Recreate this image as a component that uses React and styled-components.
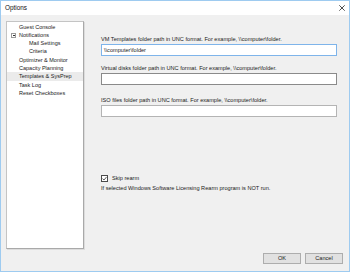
import React from "react";
import styled, { createGlobalStyle } from "styled-components";

const Global = createGlobalStyle`
  html, body { margin: 0; padding: 0; background: #ffffff; }
  * { box-sizing: border-box; }
  body { font-family: "Liberation Sans", Arial, sans-serif; color: #1a1a1a; }
`;

const Window = styled.div`
  width: 350px;
  height: 272px;
  border: 1px solid #9ecbf0;
  display: flex;
  flex-direction: column;
  background: #f0f0f0;
`;

const TitleBar = styled.div`
  height: 14px;
  flex: none;
  background: #ffffff;
  display: flex;
  align-items: center;
  justify-content: space-between;
  padding: 0 4px 0 4px;
`;

const Title = styled.span`
  font-size: 6.4px;
  line-height: 14px;
  color: #111;
`;

const CloseIcon = styled.svg`
  width: 6px;
  height: 6px;
  display: block;
`;

const Main = styled.div`
  flex: 1;
  display: flex;
  padding: 6px 0 0 5px;
  min-height: 0;
`;

const Tree = styled.div`
  width: 78px;
  flex: none;
  background: #ffffff;
  border: 1px solid #c4c4c4;
  border-right-color: #a9a9a9;
  border-bottom-color: #a9a9a9;
  box-shadow: 1px 1px 0 #dcdcdc;
  padding-top: 0.5px;
`;

const TreeRow = styled.div`
  position: relative;
  height: 8.33px;
  line-height: 8.33px;
  font-size: 5.5px;
  white-space: nowrap;
  padding-left: ${(p) => p.$indent}px;
  background: ${(p) => (p.$selected ? "#ebebeb" : "transparent")};
`;

const Expander = styled.span`
  position: absolute;
  left: 4px;
  top: 1.7px;
  width: 5px;
  height: 5px;
  border: 1px solid #9a9a9a;
  background: #fff;
  &::after {
    content: "";
    position: absolute;
    left: 0.5px;
    right: 0.5px;
    top: 1.5px;
    height: 0.8px;
    background: #333;
  }
`;

const Content = styled.div`
  margin-left: 17px;
  width: 236px;
  padding-top: 14px;
  display: flex;
  flex-direction: column;
`;

const Label = styled.div`
  font-size: 5.6px;
  line-height: 8px;
  white-space: nowrap;
  margin-top: ${(p) => p.$mt || 0}px;
  margin-bottom: 1px;
`;

const TextBox = styled.div`
  height: 12px;
  background: #ffffff;
  border: 1px solid ${(p) => p.$border};
  font-size: 5.6px;
  line-height: 10px;
  padding-left: 2px;
  white-space: nowrap;
`;

const CheckRow = styled.label`
  display: flex;
  align-items: center;
  gap: 4px;
  margin-top: 57px;
  height: 8px;
  font-size: 5.6px;
  line-height: 8px;
`;

const CheckBox = styled.span`
  width: 7px;
  height: 7px;
  border: 1px solid #4a4a4a;
  background: #ffffff;
  display: flex;
  align-items: center;
  justify-content: center;
`;

const Helper = styled.div`
  font-size: 5.6px;
  line-height: 8px;
  margin-top: 2px;
  white-space: nowrap;
`;

const Footer = styled.div`
  height: 22px;
  flex: none;
  display: flex;
  justify-content: flex-end;
  gap: 4px;
  padding: 4px 6px 7px 0;
`;

const Button = styled.button`
  width: 38px;
  height: 11px;
  padding: 0;
  margin: 0;
  background: #e1e1e1;
  border: 1px solid #adadad;
  font-family: "Liberation Sans", Arial, sans-serif;
  font-size: 5.6px;
  line-height: 9px;
  color: #1a1a1a;
`;

const treeItems = [
  { text: "Guest Console", indent: 12 },
  { text: "Notifications", indent: 12, expander: true },
  { text: "Mail Settings", indent: 22 },
  { text: "Criteria", indent: 22 },
  { text: "Optimizer & Monitor", indent: 12 },
  { text: "Capacity Planning", indent: 12 },
  { text: "Templates & SysPrep", indent: 12, selected: true },
  { text: "Task Log", indent: 12 },
  { text: "Reset Checkboxes", indent: 12 },
];

export default function App() {
  return (
    <>
      <Global />
      <Window>
        <TitleBar>
          <Title>Options</Title>
          <CloseIcon viewBox="0 0 6 6">
            <path d="M0.3 0.3 L5.7 5.7 M5.7 0.3 L0.3 5.7" stroke="#222" strokeWidth="0.8" />
          </CloseIcon>
        </TitleBar>
        <Main>
          <Tree>
            {treeItems.map((it) => (
              <TreeRow key={it.text} $indent={it.indent} $selected={it.selected}>
                {it.expander && <Expander />}
                {it.text}
              </TreeRow>
            ))}
          </Tree>
          <Content>
            <Label>VM Templates folder path in UNC format. For example, \\computer\folder.</Label>
            <TextBox $border="#7eb4ea">\\computer\folder</TextBox>
            <Label $mt={8}>Virtual disks folder path in UNC format. For example, \\computer\folder.</Label>
            <TextBox $border="#8a8a8a"></TextBox>
            <Label $mt={11}>ISO files folder path in UNC format. For example, \\computer\folder.</Label>
            <TextBox $border="#b4b4b4"></TextBox>
            <CheckRow>
              <CheckBox>
                <svg width="5" height="5" viewBox="0 0 5 5">
                  <path d="M0.5 2.6 L2 4 L4.6 0.9" fill="none" stroke="#333" strokeWidth="0.8" />
                </svg>
              </CheckBox>
              Skip rearm
            </CheckRow>
            <Helper>If selected Windows Software Licensing Rearm program is NOT run.</Helper>
          </Content>
        </Main>
        <Footer>
          <Button>OK</Button>
          <Button>Cancel</Button>
        </Footer>
      </Window>
    </>
  );
}
